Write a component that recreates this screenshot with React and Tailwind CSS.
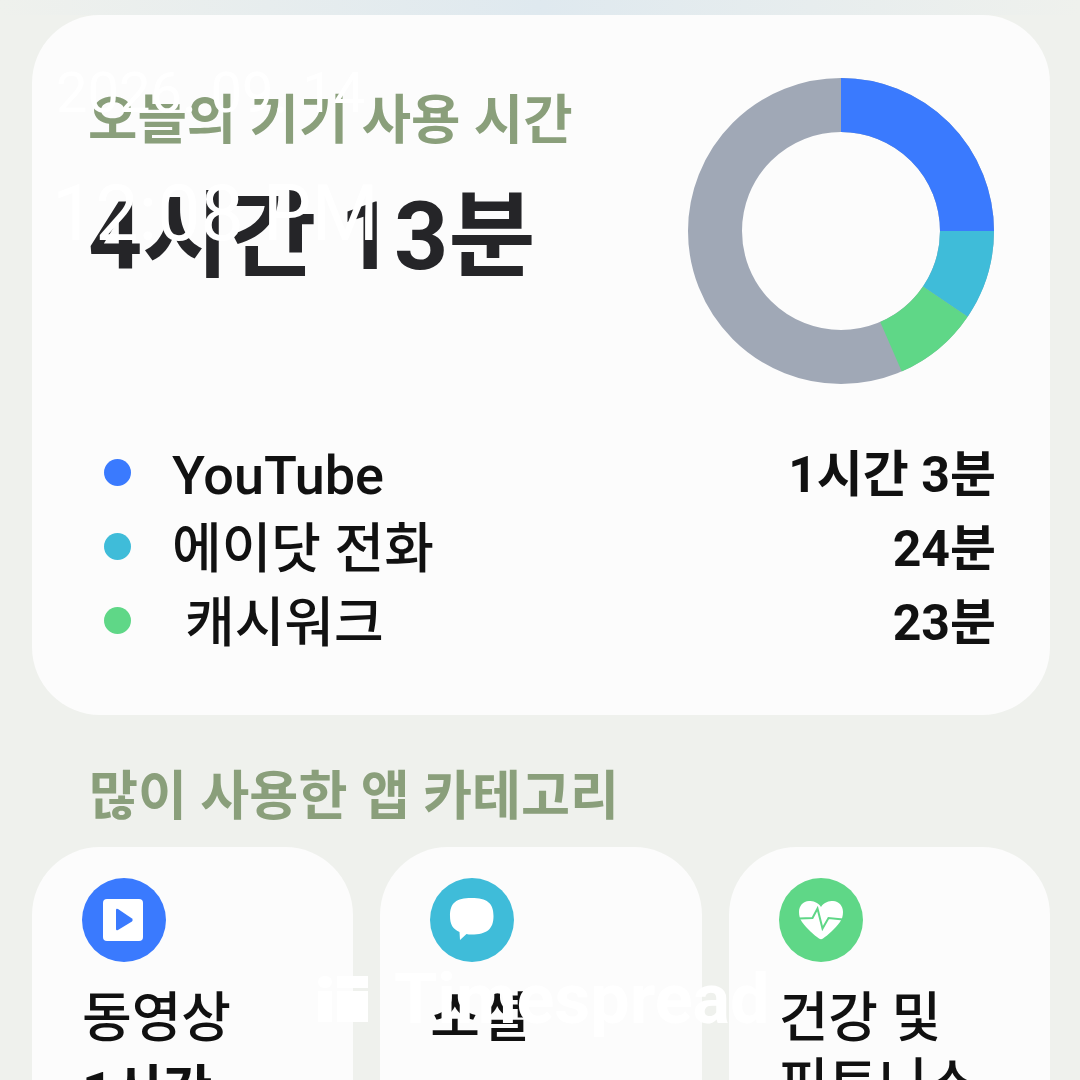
import { Fragment } from 'react'

const usage = [
  { name: 'YouTube', time: '1시간 3분', color: 'bg-[#3a7afe]' },
  { name: '에이닷 전화', time: '24분', color: 'bg-[#3fbcd9]' },
  { name: '캐시워크', time: '23분', color: 'bg-[#5fd787]', indent: true },
]

const Donut = () => (
  <svg width="306" height="306" viewBox="0 0 306 306" className="shrink-0">
    <g fill="none" strokeWidth="54">
      <circle cx="153" cy="153" r="126" stroke="#a0a8b6" />
      <path d="M153 27 A126 126 0 0 1 279 153" stroke="#3a7afe" />
      <path d="M279 153 A126 126 0 0 1 257.3 223.6" stroke="#3fbcd9" />
      <path d="M257.3 223.6 A126 126 0 0 1 203 268.7" stroke="#5fd787" />
    </g>
  </svg>
)

const PlayIcon = () => (
  <svg width="46" height="46" viewBox="0 0 46 46">
    <rect x="2" y="2" width="40" height="42" rx="4" fill="#fff" />
    <path d="M15 13 L15 32 Q15 34 17 33 L31 24.5 Q32.5 23 31 21.5 L17 12 Q15 11 15 13 Z" fill="#3a7afe" />
  </svg>
)

const ChatIcon = () => (
  <svg width="46" height="46" viewBox="0 0 46 46">
    <path d="M22.5 1 C38 1 44.5 6 44.5 19 C44.5 32 38 37.5 22.5 37.5 C20.5 37.5 19 37.5 17.5 37 L11 43 L10.5 35 C3.5 32 1 27 1 19 C1 6 7 1 22.5 1 Z" fill="#fff" />
  </svg>
)

const HeartIcon = () => (
  <svg width="46" height="46" viewBox="0 0 46 46">
    <path d="M23 10 C26 5 31 4 35 4 C41 4 45 9 45 15 C45 19 44 22 42 25 C37 32 30 38 25 41.5 Q23 43 21 41.5 C16 38 9 32 4 25 C2 22 1 19 1 15 C1 9 5 4 11 4 C15 4 20 5 23 10 Z" fill="#fff" />
    <polyline points="1,21.5 14.5,21 19.5,11.5 24.5,31.5 30.5,21 45,22.5" fill="none" stroke="#5fd787" strokeWidth="2" />
  </svg>
)

const categories = [
  { title: ['동영상'], sub: '1시간', color: 'bg-[#3a7afe]', Icon: PlayIcon },
  { title: ['소셜'], color: 'bg-[#3fbcd9]', Icon: ChatIcon },
  { title: ['건강 및', '피트니스'], color: 'bg-[#5fd787]', Icon: HeartIcon },
]

export default function App() {
  return (
    <div className="relative h-[1080px] w-[1080px] overflow-hidden bg-[#eff1ed] font-['Roboto','Noto_Sans_CJK_KR',sans-serif]">
      <div className="h-[15px] bg-gradient-to-r from-[#eff1ed] via-[#dfe9ef] to-[#eff1ed]" />

      <div className="ml-[32px] mr-[30px] flex h-[700px] flex-col rounded-[68px] bg-[#fcfcfc] px-[57px]">
        <div className="flex justify-between pt-[63px]">
          <div className="-ml-[1px]">
            <div className="mt-[13px] text-[53.7px] font-bold leading-[60px] text-[#8a9f7b]">오늘의 기기 사용 시간</div>
            <div className="mt-[31px] text-[94.6px] font-bold leading-[110px] text-[#252528]">4시간 13분</div>
          </div>
          <div className="-mr-[1px]"><Donut /></div>
        </div>

        <div className="mt-[52px] flex flex-col gap-[2px]">
          {usage.map((row) => (
            <div key={row.name} className="flex h-[72px] items-center">
              <span className={`ml-[15px] h-[27px] w-[27px] rounded-full ${row.color}`} />
              <span className={`pt-[8px] text-[54px] font-medium leading-[72px] text-[#111] ${row.indent ? 'ml-[54px]' : 'ml-[41px]'}`}>{row.name}</span>
              <span className="-mr-[3px] ml-auto pt-[6px] text-[50px] font-bold text-[#111]">{row.time}</span>
            </div>
          ))}
        </div>
      </div>

      <div className="mx-[89px] mt-[50px] text-[53.3px] font-bold leading-[64px] text-[#8a9f7b]">많이 사용한 앱 카테고리</div>

      <div className="ml-[32px] mr-[30px] mt-[18px] grid grid-cols-3 gap-[27px]">
        {categories.map(({ title, sub, color, Icon }) => (
          <div key={title[0]} className="h-[300px] rounded-[68px] bg-[#fcfcfc] px-[50px] pt-[31px]">
            <div className={`flex h-[84px] w-[84px] items-center justify-center rounded-full ${color}`}><Icon /></div>
            <div className="mt-[24px] text-[54px] font-medium leading-[66px] text-[#111]">
              {title.map((line) => (
                <Fragment key={line}>{line}<br /></Fragment>
              ))}
            </div>
            {sub && <div className="mt-[6px] text-[54px] font-bold leading-[68px] text-[#111]">{sub}</div>}
          </div>
        ))}
      </div>

      {/* timestamp + logo watermark */}
      <div className="absolute left-[56px] top-[61px] text-[56px] leading-[64px] text-white">2026. 09. 14</div>
      <div className="absolute left-[52px] top-[170px] text-[77px] leading-[88px] text-white">12:08 PM</div>
      <div className="absolute left-[318px] top-[959px] flex items-center gap-[26px] text-[70px] font-bold leading-[80px] text-white">
        <div className="flex h-[46px] w-[50px] gap-[5px]">
          <div className="flex w-[14px] flex-col gap-[3px]">
            <div className="h-[12px] rounded-full bg-white" />
            <div className="flex-1 bg-white" />
          </div>
          <div className="flex flex-1 flex-col gap-[3px]">
            <div className="h-[12px] bg-white" />
            <div className="flex-1 bg-white" />
          </div>
        </div>
        Timespread
      </div>
    </div>
  )
}
